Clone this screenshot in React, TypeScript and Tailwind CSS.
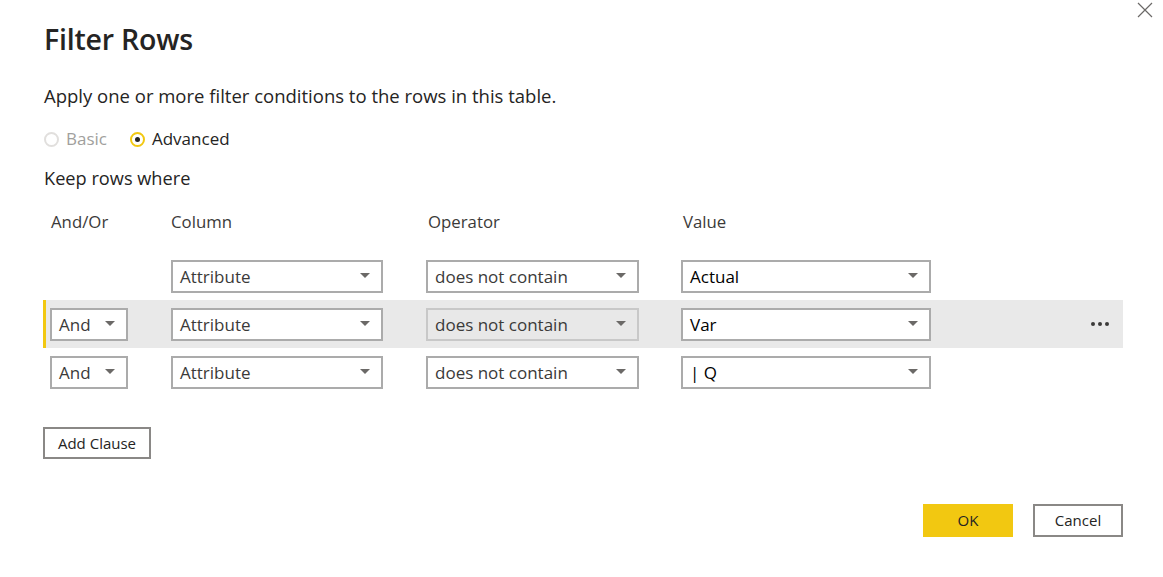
import React from "react";

const Caret = () => (
  <svg width="10" height="6" viewBox="0 0 10 6" className="shrink-0">
    <path d="M0 0 L10 0 L5 5 Z" fill="#6b6967" />
  </svg>
);

type DropProps = {
  value: string;
  width: string;
  dark?: boolean;
  disabled?: boolean;
};

const Dropdown: React.FC<DropProps> = ({ value, width, dark, disabled }) => (
  <div
    className={`${width} h-[33px] flex items-center justify-between pl-[7px] pr-[11px] border-2 ${
      disabled ? "border-[#c8c8c8] bg-[#e8e8e8]" : "border-[#ababab] bg-white"
    }`}
  >
    <span className={`text-[17px] leading-none ${dark ? "text-black" : "text-[#3b3a39]"}`}>{value}</span>
    <Caret />
  </div>
);

type Row = { andOr?: boolean; op: string; value: string; active?: boolean };

const rows: Row[] = [
  { op: "does not contain", value: "Actual" },
  { andOr: true, op: "does not contain", value: "Var", active: true },
  { andOr: true, op: "does not contain", value: "| Q" },
];

export default function App() {
  return (
    <div
      className="relative w-[1163px] h-[577px] bg-white overflow-hidden text-[#252423]"
      style={{ fontFamily: '"Open Sans", "Noto Sans", sans-serif' }}
    >
      {/* close */}
      <button className="absolute top-[2px] right-[10px] w-[16px] h-[16px]">
        <svg width="16" height="16" viewBox="0 0 16 16">
          <path d="M1 1 L15 15 M15 1 L1 15" stroke="#6b6967" strokeWidth="1.2" />
        </svg>
      </button>

      <div className="pl-[44px] pr-[40px] pt-[20px]">
        <h1 className="text-[28.5px] font-semibold leading-[38px] tracking-[-0.2px]">Filter Rows</h1>

        <p className="mt-[26px] text-[18.5px] leading-[24px]">
          Apply one or more filter conditions to the rows in this table.
        </p>

        <div className="mt-[19px] flex items-center h-[24px] text-[17px]">
          <span className="w-[15px] h-[15px] rounded-full border-2 border-[#e1dfdd] mr-[7px]" />
          <span className="text-[#a19f9d]">Basic</span>
          <span className="ml-[23px] w-[15px] h-[15px] rounded-full border-2 border-[#f2c811] mr-[7px] flex items-center justify-center">
            <span className="w-[5px] h-[5px] rounded-full bg-[#252423]" />
          </span>
          <span>Advanced</span>
        </div>

        <p className="mt-[15px] text-[18.2px] leading-[24px]">Keep rows where</p>

        <div className="mt-[20px] flex text-[16.8px] leading-[24px] text-[#3b3a39]">
          <span className="ml-[7px] w-[120px]">And/Or</span>
          <span className="w-[257px]">Column</span>
          <span className="w-[255px]">Operator</span>
          <span>Value</span>
        </div>

        <div className="mt-[18px] -ml-[1px] w-[1080px]">
          {rows.map((r, i) => (
            <div
              key={i}
              className={`h-[48px] flex items-center ${
                r.active ? "bg-[#e9e9e9] border-l-[3px] border-[#f2c811]" : "border-l-[3px] border-transparent"
              }`}
            >
              <div className="ml-[4px] w-[78px]">
                {r.andOr && <Dropdown value="And" width="w-[78px]" />}
              </div>
              <div className="ml-[43px]">
                <Dropdown value="Attribute" width="w-[212px]" />
              </div>
              <div className="ml-[43px]">
                <Dropdown value={r.op} width="w-[213px]" disabled={r.active} />
              </div>
              <div className="ml-[42px]">
                <Dropdown value={r.value} width="w-[250px]" dark />
              </div>
              <div className="flex-1 flex justify-end pr-[14px]">
                {r.active && (
                  <div className="flex gap-[3px]">
                    <span className="w-[4px] h-[4px] rounded-full bg-[#3b3a39]" />
                    <span className="w-[4px] h-[4px] rounded-full bg-[#3b3a39]" />
                    <span className="w-[4px] h-[4px] rounded-full bg-[#3b3a39]" />
                  </div>
                )}
              </div>
            </div>
          ))}
        </div>

        <button className="mt-[31px] -ml-[1px] w-[108px] h-[32px] border-2 border-[#8a8886] bg-white text-[15px] text-[#252423] flex items-center justify-center">
          Add Clause
        </button>

        <div className="mt-[45px] -ml-[1px] w-[1080px] flex justify-end gap-[20px]">
          <button className="w-[90px] h-[33px] bg-[#f2c811] text-[15px] text-[#252423]">OK</button>
          <button className="w-[90px] h-[33px] border-2 border-[#8a8886] bg-white text-[15px] text-[#252423]">
            Cancel
          </button>
        </div>
      </div>
    </div>
  );
}
